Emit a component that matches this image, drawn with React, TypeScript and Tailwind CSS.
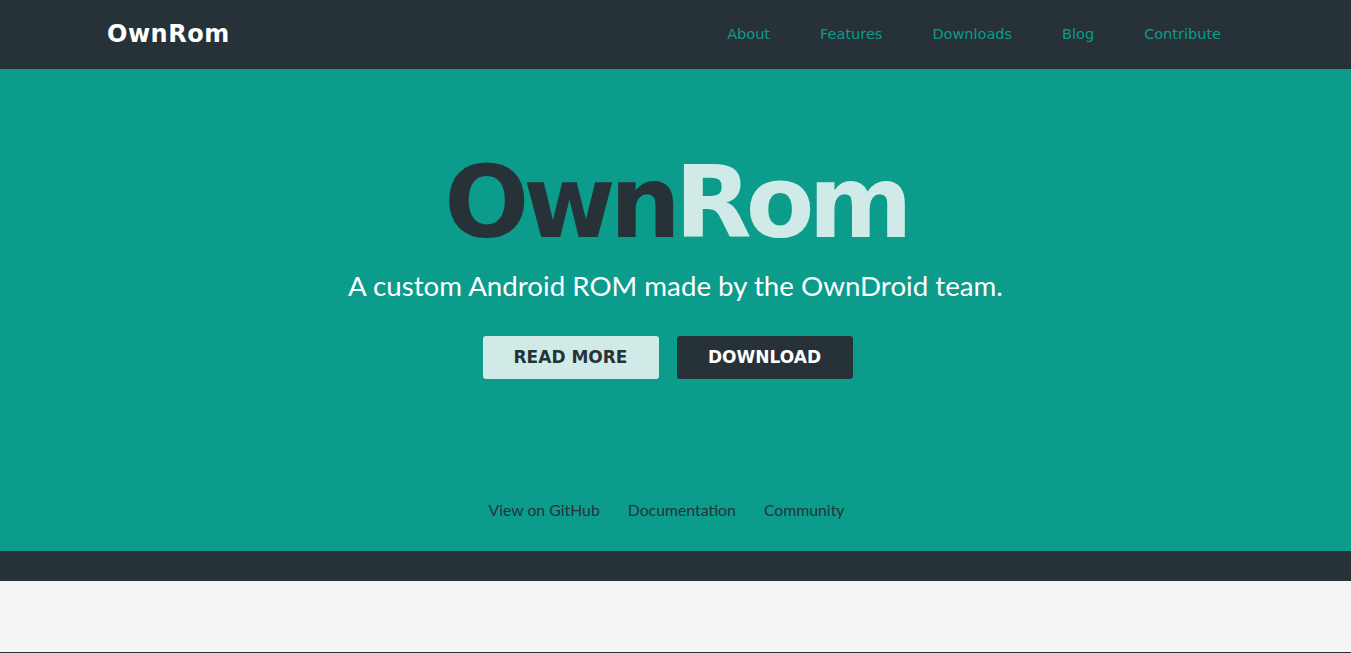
import React from "react";

export default function App() {
  return (
    <div className="min-h-screen bg-[#f5f5f5]" style={{ fontFamily: 'Lato, "Liberation Sans", sans-serif' }}>
      <header className="h-[69px] bg-[#263238] flex items-center justify-between pl-[107px] pr-[130px]">
        <div className="text-white text-[24px] font-bold tracking-[0.5px] font-['DejaVu_Sans',sans-serif] -mt-[2px]">OwnRom</div>
        <nav className="flex gap-[50px] text-[14.5px] text-[#0e9a8a] font-['DejaVu_Sans',sans-serif]">
          <a>About</a>
          <a>Features</a>
          <a>Downloads</a>
          <a>Blog</a>
          <a>Contribute</a>
        </nav>
      </header>
      <section className="h-[482px] bg-[#0b9c8c] flex flex-col items-center pt-[84px]">
        <h1 className="text-[100px] leading-none tracking-[-6px] font-bold font-['DejaVu_Sans',sans-serif]">
          <span className="text-[#263238]">Own</span>
          <span className="text-[#d0ebe7]">Rom</span>
        </h1>
        <p className="mt-[19px] text-[27.7px] leading-none text-white font-['Lato',sans-serif]">A custom Android ROM made by the OwnDroid team.</p>
        <div className="mt-[36px] flex gap-[18px] pr-[16px]">
          <button className="w-[176px] h-[43px] pt-[2px] rounded-[3px] bg-[#d0ebe7] text-[#263238] text-[17px] font-bold font-['DejaVu_Sans',sans-serif]">READ MORE</button>
          <button className="w-[176px] h-[43px] pt-[2px] rounded-[3px] bg-[#263238] text-white text-[17px] font-bold font-['DejaVu_Sans',sans-serif]">DOWNLOAD</button>
        </div>
        <div className="mt-[123px] flex gap-[28px] pr-[18px] text-[15.8px] leading-none text-[#263238] font-['Lato',sans-serif]">
          <a>View on GitHub</a>
          <a>Documentation</a>
          <a>Community</a>
        </div>
      </section>
      <div className="h-[30px] bg-[#263238]" />
      <div className="h-[71px] bg-[#f5f5f5]" />
      <div className="h-[1px] bg-[#263238]" />
    </div>
  );
}
